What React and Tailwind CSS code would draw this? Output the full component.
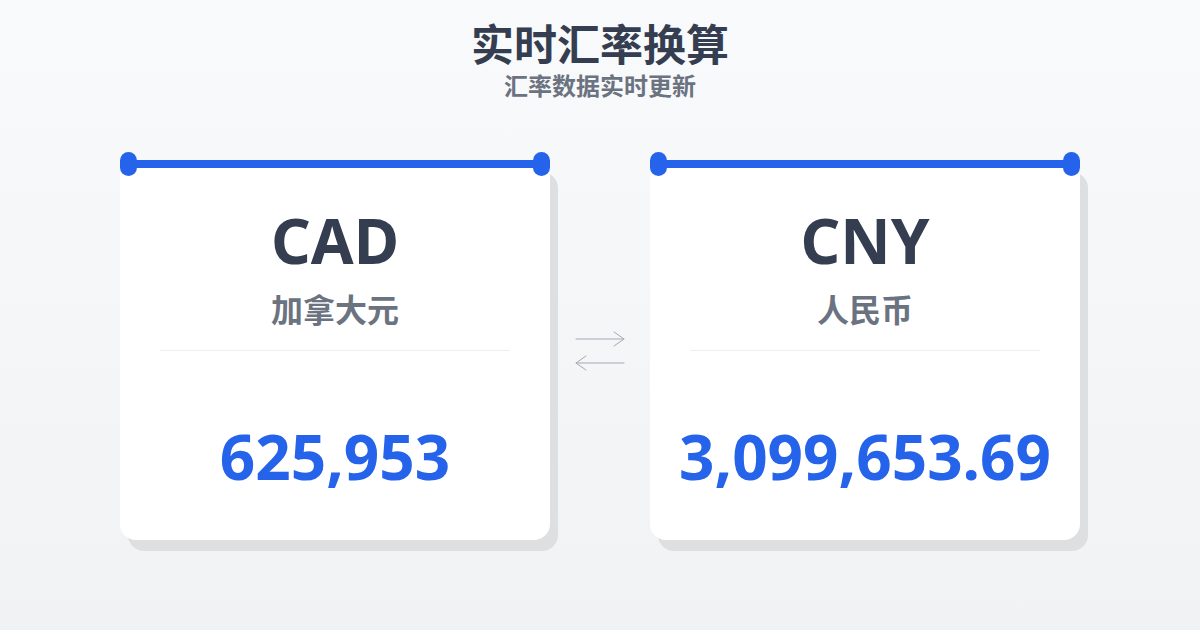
import React from 'react';

const PAIRS = [
  { code: 'CAD', name: '加拿大元', amount: '625,953' },
  { code: 'CNY', name: '人民币', amount: '3,099,653.69' },
];

function SwapIcon() {
  return (
    <svg width="52" height="40" viewBox="0 0 52 40" fill="none" stroke="#a3a8b3" strokeWidth="1" strokeLinecap="round">
      <path d="M2 8 H50 M40 1 L50 8 L40 15" />
      <path d="M50 32 H2 M12 25 L2 32 L12 39" />
    </svg>
  );
}

function CurrencyCard({ code, name, amount }) {
  return (
    <div className="relative w-[430px] h-[376px]">
      {/* offset backing */}
      <div className="absolute left-[8px] top-[8px] w-[430px] h-[379px] rounded-2xl bg-[#dedfe1]" />
      <div className="relative flex flex-col items-center w-full h-full bg-white rounded-b-2xl">
        {/* top rail with end caps */}
        <div className="absolute left-0 right-0 top-[-4px] h-[8px] bg-[#2563eb]" />
        <div className="absolute left-0 top-[-12px] w-[17px] h-[24px] rounded-full bg-[#2563eb]" />
        <div className="absolute right-0 top-[-12px] w-[17px] h-[24px] rounded-full bg-[#2563eb]" />

        <div className="mt-[45px] text-[62px] leading-[62px] font-bold text-[#353e50]">{code}</div>
        <div className="mt-[23px] text-[32px] leading-[32px] font-bold text-[#6b7280]">{name}</div>
        <div className="mt-[24px] w-[350px] h-px bg-[#eeeff1]" />
        <div className="mt-[74px] text-[62px] leading-[62px] font-bold text-[#2563eb]">{amount}</div>
      </div>
    </div>
  );
}

export default function App() {
  return (
    <div
      className="w-[1200px] h-[630px] overflow-hidden bg-gradient-to-b from-[#f9fafb] to-[#f1f2f4] flex flex-col items-center"
      style={{ fontFamily: '"Noto Sans", "Noto Sans CJK SC", sans-serif' }}
    >
      <h1 className="mt-[23px] text-[43px] leading-[44px] font-bold text-[#353e50]">实时汇率换算</h1>
      <p className="mt-[5px] text-[24px] leading-[28px] font-bold text-[#6b7280]">汇率数据实时更新</p>

      <div className="mt-[64px] flex items-start">
        <CurrencyCard {...PAIRS[0]} />
        <div className="w-[100px] h-[376px] flex justify-center pt-[167px]">
          <SwapIcon />
        </div>
        <CurrencyCard {...PAIRS[1]} />
      </div>
    </div>
  );
}
